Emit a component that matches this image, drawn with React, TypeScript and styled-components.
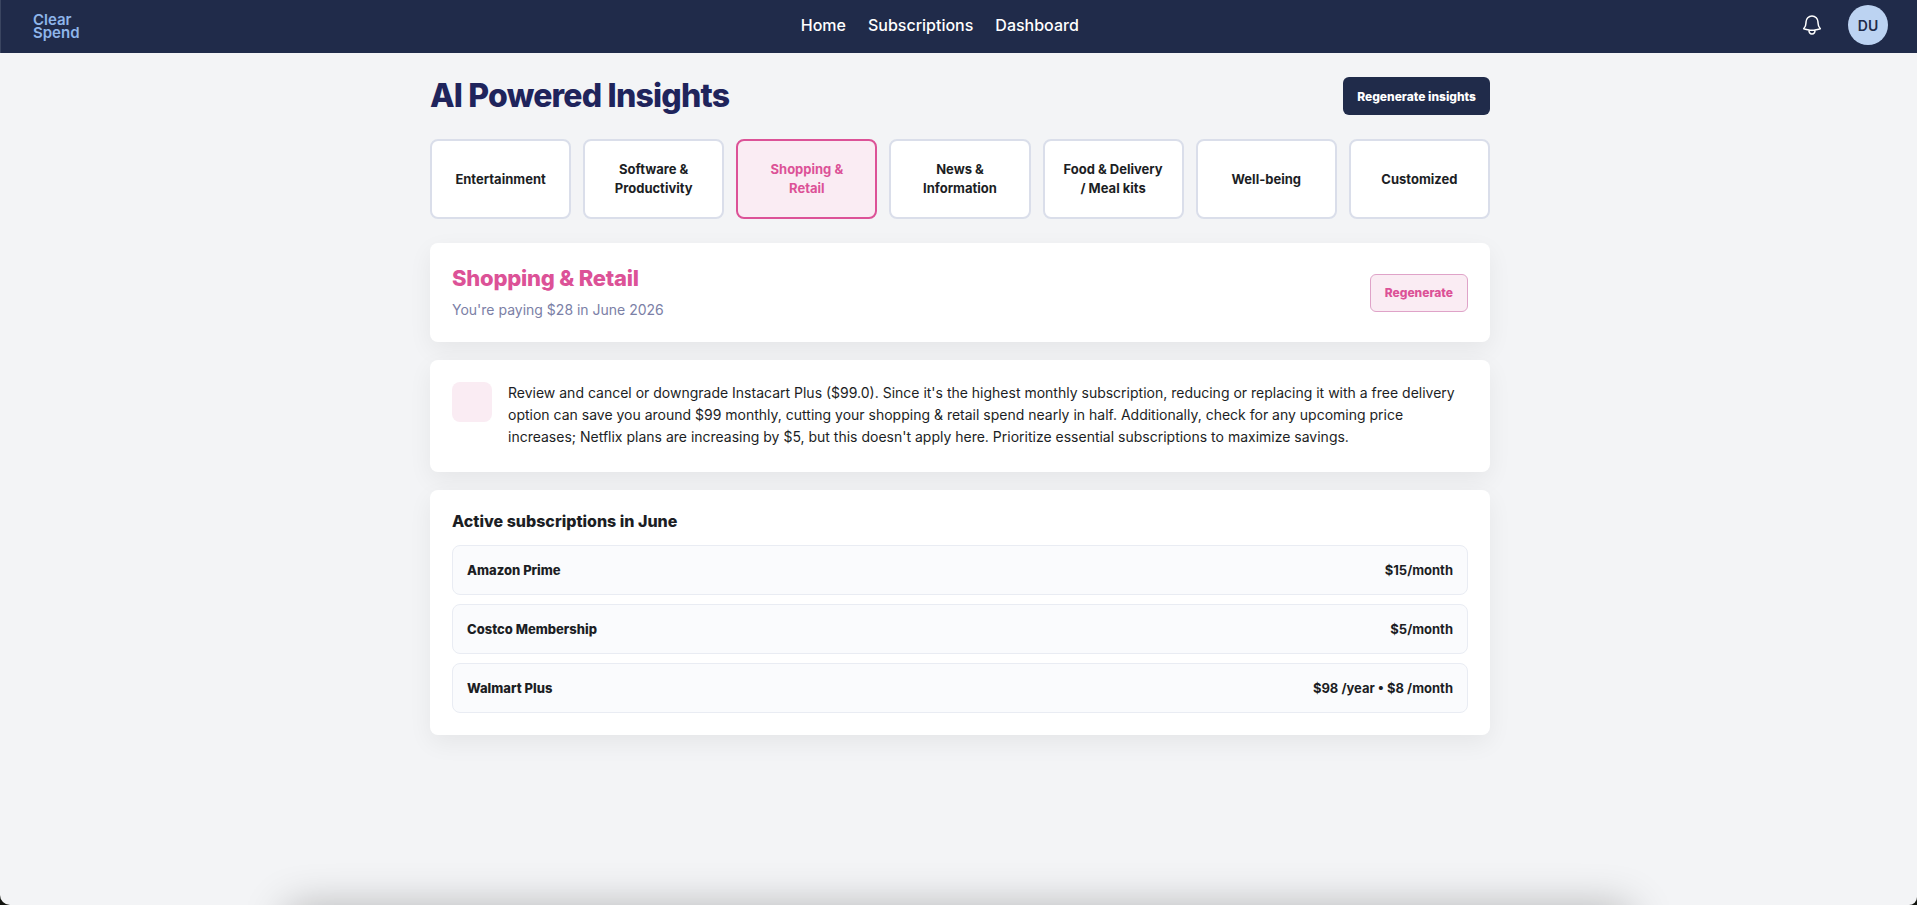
import React, { useState } from 'react';
import styled, { createGlobalStyle } from 'styled-components';
import { HiOutlineBell } from 'react-icons/hi2';

const GlobalStyle = createGlobalStyle`
  *, *::before, *::after { box-sizing: border-box; }
  html { background: #12140f; }
  body {
    margin: 0;
    font-family: Inter, "Liberation Sans", sans-serif;
    font-size: 14px;
    color: #1c1e24;
  }
  h1, h2, h3, p, ul { margin: 0; padding: 0; }
  button { font-family: inherit; cursor: pointer; }
`;

const Page = styled.div`
  position: relative;
  overflow: hidden;
  min-height: 100vh;
  background: #f3f4f6;
  border-radius: 0 0 8px 10px;
`;

const Header = styled.header`
  display: flex;
  align-items: center;
  justify-content: space-between;
  padding: 5px 29px 8px 32px;
  background: #202b4a;
  border-left: 1px solid #3a4560;
`;

const Logo = styled.a`
  display: flex;
  flex-direction: column;
  padding-top: 2px;
  font-size: 15px;
  line-height: 13px;
  font-weight: 600;
  color: #8fb6ea;
  text-decoration: none;
`;

const Nav = styled.nav`
  display: flex;
  gap: 22px;
`;

const NavLink = styled.a`
  font-size: 16px;
  line-height: 24px;
  font-weight: 500;
  color: #fff;
  text-decoration: none;
`;

const Account = styled.div`
  display: flex;
  align-items: center;
  gap: 24px;
`;

const IconButton = styled.button`
  display: flex;
  padding: 0;
  border: 0;
  background: none;
  color: #fff;
`;

const Avatar = styled.button`
  width: 40px;
  height: 40px;
  padding: 0;
  border: 0;
  border-radius: 50%;
  background: #bcd3f2;
  color: #202b4a;
  font-size: 14px;
  font-weight: 600;
`;

const Main = styled.main`
  display: flex;
  flex-direction: column;
  gap: 24px;
  width: 100%;
  max-width: 1101px;
  margin: 0 auto;
  padding: 24px 19px 24px 22px;
`;

const TitleRow = styled.div`
  display: flex;
  align-items: center;
  justify-content: space-between;
`;

const Title = styled.h1`
  font-size: 32px;
  line-height: 38px;
  font-weight: 800;
  letter-spacing: -0.025em;
  color: #1f245c;
`;

const ActionButton = styled.button<{ $soft?: boolean }>`
  height: 38px;
  padding: 0 14px;
  border: ${p => (p.$soft ? '1px solid #dfa3c8' : '0')};
  border-radius: 6px;
  background: ${p => (p.$soft ? '#faecf3' : '#202b4a')};
  color: ${p => (p.$soft ? '#dc5297' : '#fff')};
  font-size: 12px;
  font-weight: 800;
`;

const Tabs = styled.div`
  display: grid;
  grid-template-columns: repeat(7, 1fr);
  gap: 12px;
`;

const Tab = styled.button<{ $active: boolean }>`
  height: 80px;
  padding: 0 16px;
  border: 2px solid ${p => (p.$active ? '#dc5297' : '#dadeea')};
  border-radius: 8px;
  background: ${p => (p.$active ? '#faecf3' : '#fff')};
  color: ${p => (p.$active ? '#dc5297' : '#1c1e24')};
  font-size: 13px;
  line-height: 19px;
  font-weight: 700;
`;

const Stack = styled.div`
  display: flex;
  flex-direction: column;
  gap: 18px;
`;

const Card = styled.section`
  padding: 22px;
  border-radius: 8px;
  background: #fff;
  box-shadow: 0 8px 24px rgba(0, 0, 0, 0.06);
`;

const SummaryCard = styled(Card)`
  display: flex;
  align-items: center;
  justify-content: space-between;
`;

const CategoryTitle = styled.h2`
  font-size: 22px;
  line-height: 27px;
  font-weight: 800;
  letter-spacing: -0.01em;
  color: #dc5297;
`;

const Spending = styled.p`
  margin-top: 8px;
  font-size: 14px;
  line-height: 20px;
  color: #7b80a6;
`;

const InsightCard = styled(Card)`
  display: flex;
  gap: 16px;
  padding-bottom: 24px;
`;

const InsightBadge = styled.div`
  flex: none;
  width: 40px;
  height: 40px;
  border-radius: 8px;
  background: #faecf3;
`;

const InsightText = styled.p`
  font-size: 14px;
  line-height: 22px;
`;

const ListTitle = styled.h3`
  margin-bottom: 14px;
  font-size: 16px;
  line-height: 19px;
  font-weight: 800;
`;

const List = styled.ul`
  display: flex;
  flex-direction: column;
  gap: 9px;
  list-style: none;
`;

const ListRow = styled.li`
  display: flex;
  align-items: center;
  justify-content: space-between;
  height: 50px;
  padding: 0 14px;
  border: 1px solid #e9ecf3;
  border-radius: 8px;
  background: #fafbfd;
  font-size: 13px;
  line-height: 18px;
`;

const ServiceName = styled.span`
  font-weight: 800;
`;

const Price = styled.span`
  font-weight: 700;
`;

/* Soft shadow rising from below the bottom edge of the window. */
const BottomShade = styled.div`
  position: absolute;
  top: 100%;
  left: 15%;
  right: 15%;
  height: 40px;
  box-shadow: 0 4px 44px rgba(0, 0, 0, 0.3);
  pointer-events: none;
`;

const categories = [
  'Entertainment',
  'Software & Productivity',
  'Shopping & Retail',
  'News & Information',
  'Food & Delivery / Meal kits',
  'Well-being',
  'Customized',
];

const subscriptions = [
  { name: 'Amazon Prime', price: '$15/month' },
  { name: 'Costco Membership', price: '$5/month' },
  { name: 'Walmart Plus', price: '$98 /year • $8 /month' },
];

export default function App() {
  const [active, setActive] = useState('Shopping & Retail');

  return (
    <>
      <GlobalStyle />
      <Page>
        <Header>
          <Logo href="#home">
            <span>Clear</span>
            <span>Spend</span>
          </Logo>
          <Nav>
            <NavLink href="#home">Home</NavLink>
            <NavLink href="#subscriptions">Subscriptions</NavLink>
            <NavLink href="#dashboard">Dashboard</NavLink>
          </Nav>
          <Account>
            <IconButton aria-label="Notifications">
              <HiOutlineBell size={24} />
            </IconButton>
            <Avatar>DU</Avatar>
          </Account>
        </Header>
        <Main>
          <TitleRow>
            <Title>AI Powered Insights</Title>
            <ActionButton>Regenerate insights</ActionButton>
          </TitleRow>
          <Tabs>
            {categories.map(name => (
              <Tab
                key={name}
                $active={name === active}
                aria-pressed={name === active}
                onClick={() => setActive(name)}
              >
                {name}
              </Tab>
            ))}
          </Tabs>
          <Stack>
            <SummaryCard>
              <div>
                <CategoryTitle>{active}</CategoryTitle>
                <Spending>You're paying $28 in June 2026</Spending>
              </div>
              <ActionButton $soft>Regenerate</ActionButton>
            </SummaryCard>
            <InsightCard>
              <InsightBadge />
              <InsightText>
                Review and cancel or downgrade Instacart Plus ($99.0). Since it's the highest
                monthly subscription, reducing or replacing it with a free delivery option can
                save you around $99 monthly, cutting your shopping &amp; retail spend nearly in
                half. Additionally, check for any upcoming price increases; Netflix plans are
                increasing by $5, but this doesn't apply here. Prioritize essential
                subscriptions to maximize savings.
              </InsightText>
            </InsightCard>
            <Card>
              <ListTitle>Active subscriptions in June</ListTitle>
              <List>
                {subscriptions.map(item => (
                  <ListRow key={item.name}>
                    <ServiceName>{item.name}</ServiceName>
                    <Price>{item.price}</Price>
                  </ListRow>
                ))}
              </List>
            </Card>
          </Stack>
        </Main>
        <BottomShade />
      </Page>
    </>
  );
}
